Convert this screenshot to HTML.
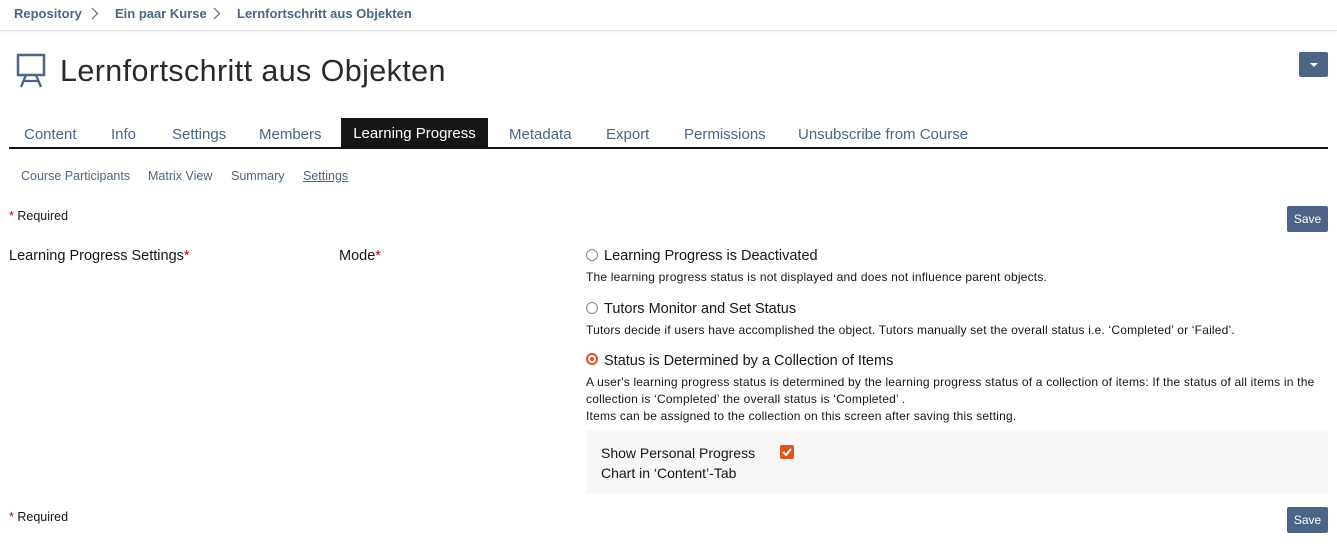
<!DOCTYPE html>
<html><head><meta charset="utf-8"><style>
body{margin:0;width:1337px;height:546px;background:#fff;font-family:"Liberation Sans",sans-serif;color:#161616;position:relative;overflow:hidden}
.a{position:absolute;white-space:nowrap}
.bc{top:6px;font-size:13px;color:#4c6586;font-weight:bold}
.tab{top:126px;font-size:15px;color:#4c6586}
.sub{top:169px;font-size:12.5px;color:#4c6586}
.btn{background:#4c6586;color:#fff;font-size:12px;width:41px;height:26px;line-height:26px;text-align:center;border-radius:2px}
.radio{width:10px;height:10px;border:1.5px solid #888;border-radius:50%;background:#fff}
.lbl{font-size:14.5px}
.desc{font-size:12px;line-height:17px;letter-spacing:0.2px}
</style></head><body>
<div class="a bc" style="left:14px">Repository</div>
<svg class="a" style="left:91px;top:7px" width="8" height="13"><path d="M1 1 L6.5 6.5 L1 12" stroke="#777" stroke-width="1.3" fill="none"/></svg>
<div class="a bc" style="left:115px">Ein paar Kurse</div>
<svg class="a" style="left:213px;top:7px" width="8" height="13"><path d="M1 1 L6.5 6.5 L1 12" stroke="#777" stroke-width="1.3" fill="none"/></svg>
<div class="a bc" style="left:237px">Lernfortschritt aus Objekten</div>
<div class="a" style="left:0;top:30px;width:1337px;height:1px;background:#e2e2e2;box-shadow:0 1px 2px rgba(0,0,0,.08)"></div>
<svg class="a" style="left:16px;top:53px" width="30" height="35" viewBox="0 0 30 35"><rect x="2" y="2" width="26" height="20" fill="none" stroke="#4c6586" stroke-width="2.5"/><path d="M10 22 L5 34 M20 22 L25 34 M8 28 H22" stroke="#4c6586" stroke-width="2.3" fill="none"/></svg>
<div class="a" style="left:60px;top:54px;font-size:30.5px;color:#2a2a2a;letter-spacing:0.4px">Lernfortschritt aus Objekten</div>
<div class="a" style="left:1299px;top:52px;width:29px;height:25px;background:#4c6586;border-radius:2px"><div style="margin:11px auto 0;width:0;height:0;border-left:4px solid transparent;border-right:4px solid transparent;border-top:4px solid #fff"></div></div>
<div class="a tab" style="left:24px">Content</div>
<div class="a tab" style="left:111px">Info</div>
<div class="a tab" style="left:172px">Settings</div>
<div class="a tab" style="left:259px">Members</div>
<div class="a" style="left:341px;top:118px;width:147px;height:30px;background:#161616;color:#fff;font-size:15px;text-align:center;line-height:32px">Learning Progress</div>
<div class="a tab" style="left:509px">Metadata</div>
<div class="a tab" style="left:606px">Export</div>
<div class="a tab" style="left:684px">Permissions</div>
<div class="a tab" style="left:798px">Unsubscribe from Course</div>
<div class="a" style="left:9px;top:147px;width:1319px;height:2px;background:#161616"></div>
<div class="a sub" style="left:21px">Course Participants</div>
<div class="a sub" style="left:148px">Matrix View</div>
<div class="a sub" style="left:231px">Summary</div>
<div class="a sub" style="left:303px;text-decoration:underline">Settings</div>
<div class="a" style="left:9px;top:209px;font-size:12.5px"><span style="color:#c00">*</span> Required</div>
<div class="a btn" style="left:1287px;top:206px">Save</div>
<div class="a lbl" style="left:9px;top:248px">Learning Progress Settings<span style="color:#c00">*</span></div>
<div class="a lbl" style="left:339px;top:248px">Mode<span style="color:#c00">*</span></div>
<div class="a radio" style="left:586px;top:249px"></div>
<div class="a lbl" style="left:604px;top:248px">Learning Progress is Deactivated</div>
<div class="a desc" style="left:586px;top:269px">The learning progress status is not displayed and does not influence parent objects.</div>
<div class="a radio" style="left:586px;top:302px"></div>
<div class="a lbl" style="left:604px;top:301px">Tutors Monitor and Set Status</div>
<div class="a desc" style="left:586px;top:322px">Tutors decide if users have accomplished the object. Tutors manually set the overall status i.e. ‘Completed’ or ‘Failed’.</div>
<div class="a radio" style="left:586px;top:353px;border-color:#e3531e;width:8px;height:8px;border-width:2.5px"><div style="margin:2px;width:4px;height:4px;border-radius:50%;background:#e3531e"></div></div>
<div class="a lbl" style="left:604px;top:353px">Status is Determined by a Collection of Items</div>
<div class="a desc" style="left:586px;top:374px">A user's learning progress status is determined by the learning progress status of a collection of items: If the status of all items in the<br>collection is ‘Completed’ the overall status is ‘Completed’ .<br>Items can be assigned to the collection on this screen after saving this setting.</div>
<div class="a" style="left:586px;top:430px;width:742px;height:64px;background:#f7f7f7"></div>
<div class="a" style="left:601px;top:443px;font-size:14px;line-height:20px">Show Personal Progress<br>Chart in ‘Content’-Tab</div>
<div class="a" style="left:780px;top:445px;width:14px;height:14px;background:#e3531e;border-radius:2px"><svg width="14" height="14"><path d="M3 7 L6 10 L11 4" stroke="#fff" stroke-width="2" fill="none"/></svg></div>
<div class="a" style="left:9px;top:510px;font-size:12.5px"><span style="color:#c00">*</span> Required</div>
<div class="a btn" style="left:1287px;top:507px">Save</div>
</body></html>
